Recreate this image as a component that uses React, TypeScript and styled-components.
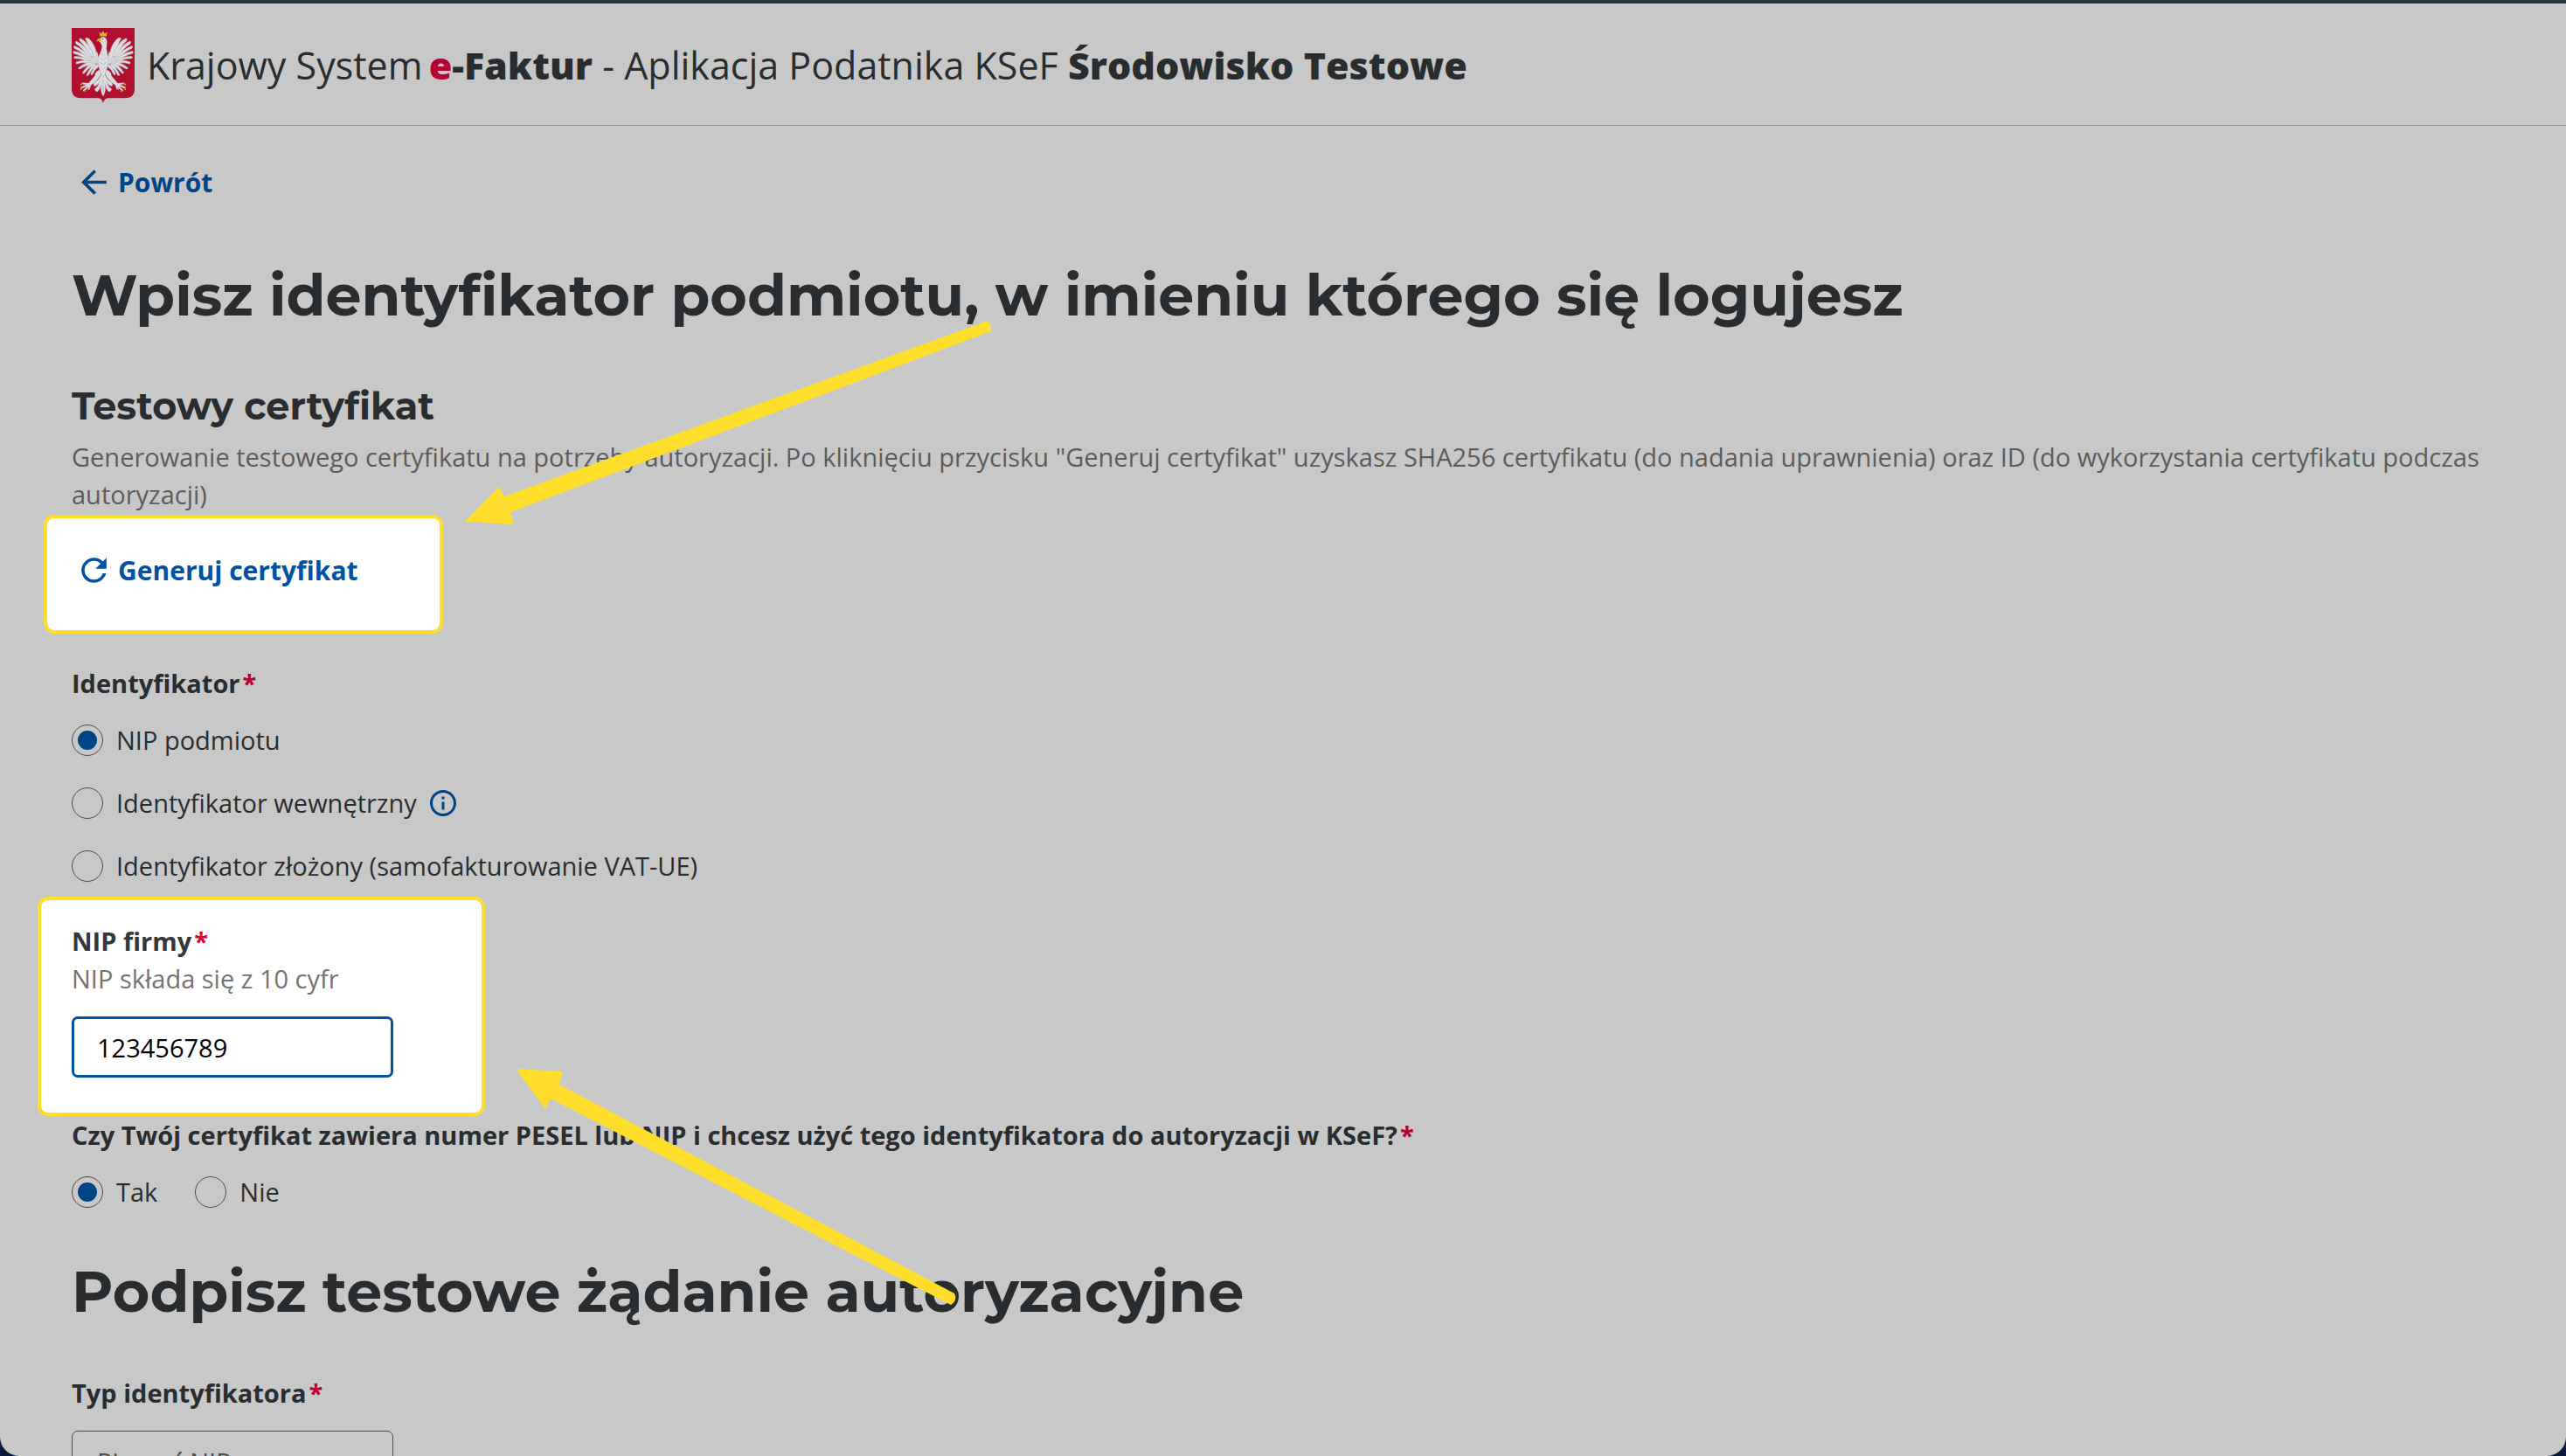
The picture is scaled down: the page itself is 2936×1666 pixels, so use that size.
import React, { useState } from 'react';
import styled, { createGlobalStyle } from 'styled-components';
import { MdArrowBack, MdInfoOutline, MdRefresh } from 'react-icons/md';

const color = {
  page: '#c8c8c8',
  ink: '#2a2d30',
  muted: '#5c5c5c',
  link: '#004488',
  red: '#b40032',
  yellow: '#ffdd2b',
  line: '#8f8f8f',
};

const GlobalStyle = createGlobalStyle`
  *, *::before, *::after { box-sizing: border-box; }
  body {
    margin: 0;
    background: #0a1a3c;
    color: ${color.ink};
    font-family: 'Open Sans', 'Noto Sans', sans-serif;
    font-size: 29px;
    line-height: 43px;
  }
  h1, h2, p, fieldset, legend { margin: 0; padding: 0; border: 0; }
`;

const Page = styled.div`
  height: 100vh;
  overflow: hidden;
  background: ${color.page};
  border-top: 4px solid #28333d;
  border-radius: 0 0 22px 22px;
`;

const Header = styled.header`
  display: flex;
  align-items: center;
  gap: 14px;
  height: 140px;
  padding: 2px 82px 0;
  border-bottom: 1px solid ${color.line};
`;

const Emblem = styled.svg`
  width: 72px;
  height: 86px;
  flex: none;
`;

const Brand = styled.p`
  font-size: 43px;
  line-height: 60px;
  b { font-weight: 800; }
`;

const BrandMark = styled.b`
  margin-left: -4px;
`;

const Accent = styled.span`
  color: ${color.red};
`;

const Main = styled.main`
  display: flex;
  flex-direction: column;
  align-items: flex-start;
  padding: 43px 82px 0;
`;

const TextButton = styled.button<{ $bright?: boolean }>`
  display: flex;
  align-items: center;
  gap: 6px;
  height: 43px;
  margin: 0;
  padding: 0 4px;
  border: 0;
  background: none;
  color: ${(p) => (p.$bright ? '#0052a5' : color.link)};
  font: inherit;
  font-size: 30px;
  font-weight: 700;
  cursor: pointer;
  svg { width: 43px; height: 43px; flex: none; }
`;

const Title = styled.h1<{ $top: number }>`
  margin-top: ${(p) => p.$top}px;
  font-family: Montserrat, Inter, sans-serif;
  font-size: 65px;
  line-height: 80px;
  font-weight: 700;
`;

const Subtitle = styled.h2`
  margin: 60px 0 9px;
  font-family: Montserrat, Inter, sans-serif;
  font-size: 43px;
  line-height: 54px;
  font-weight: 700;
`;

const Hint = styled.p<{ $bright?: boolean }>`
  color: ${(p) => (p.$bright ? '#737373' : color.muted)};
`;

const Highlight = styled.section<{ $outset: number; $width: number; $pad: string }>`
  position: relative;
  width: ${(p) => p.$width}px;
  margin-left: -${(p) => p.$outset}px;
  padding: ${(p) => p.$pad};
  background: #fff;
  border: 4px solid ${color.yellow};
  border-radius: 12px;
`;

const CertificateBox = styled(Highlight)`
  margin-top: 2px;
`;

const TaxIdBox = styled(Highlight)`
  margin-top: 14px;
`;

const Pointer = styled.svg<{ $left: number; $top: number }>`
  position: absolute;
  left: ${(p) => p.$left}px;
  top: ${(p) => p.$top}px;
  fill: ${color.yellow};
  pointer-events: none;
  z-index: 1;
`;

const Group = styled.fieldset<{ $top: number }>`
  margin-top: ${(p) => p.$top}px;
  min-width: 0;
`;

const Legend = styled.legend`
  font-weight: 700;
`;

const Label = styled.label<{ $bright?: boolean }>`
  display: block;
  font-weight: 700;
  color: ${(p) => (p.$bright ? '#33373b' : color.ink)};
`;

const Star = styled.span<{ $bright?: boolean }>`
  margin-left: 3px;
  color: ${(p) => (p.$bright ? '#e00034' : color.red)};
`;

const Options = styled.div<{ $inline?: boolean }>`
  display: flex;
  flex-direction: ${(p) => (p.$inline ? 'row' : 'column')};
  gap: ${(p) => (p.$inline ? 43 : 29)}px;
  margin-top: 22px;
`;

const Option = styled.div`
  display: flex;
  align-items: center;
`;

const OptionLabel = styled.label`
  display: flex;
  align-items: center;
  gap: 15px;
`;

const Radio = styled.input`
  appearance: none;
  display: grid;
  place-items: center;
  width: 36px;
  height: 36px;
  margin: 0;
  border: 1px solid #4c4c4c;
  border-radius: 50%;
  &:checked::before {
    content: '';
    width: 22px;
    height: 22px;
    border-radius: 50%;
    background: ${color.link};
  }
`;

const InfoButton = styled.button`
  display: flex;
  margin: 0 0 0 12px;
  padding: 0;
  border: 0;
  background: none;
  color: ${color.link};
  svg { width: 36px; height: 36px; }
`;

const fieldBox = `
  display: block;
  width: 368px;
  height: 70px;
  margin: 22px 0 0;
  border-radius: 7px;
  background: transparent;
  font: inherit;
  outline: 0;
`;

const TextInput = styled.input`
  ${fieldBox}
  padding: 0 26px;
  border: 3px solid #0052a5;
  color: #000;
`;

const Select = styled.select`
  ${fieldBox}
  appearance: none;
  padding: 0 28px;
  border: 1px solid #4c4c4c;
  color: #4c4c4c;
`;

const wingFeathers = [
  'M130 152 L122 120 Q116 86 94 68 Q84 64 83 70 Q94 84 95 104 L112 140Z',
  'M114 132 Q96 82 66 68 Q60 70 64 77 Q82 92 98 128Z',
  'M108 136 Q84 92 52 78 Q46 82 52 88 Q74 100 96 136Z',
  'M110 142 Q76 104 45 94 Q40 99 46 103 Q72 114 98 144Z',
  'M112 146 Q74 116 43 112 Q38 118 44 120 Q70 126 98 148Z',
  'M112 148 Q74 128 46 130 Q40 136 48 137 Q76 136 100 154Z',
  'M114 148 Q80 138 52 149 Q48 156 56 155 Q82 146 104 158Z',
  'M116 148 Q88 146 60 168 Q58 175 66 172 Q88 158 108 160Z',
  'M118 150 Q94 154 74 184 Q74 192 81 186 Q96 166 114 160Z',
  'M120 152 Q102 162 88 192 Q89 199 95 193 Q106 172 120 162Z',
  'M126 154 Q108 170 102 190 Q104 197 109 190 Q116 174 130 164Z',
];

function Wing() {
  return (
    <g>
      {wingFeathers.map((d) => (
        <path key={d} d={d} fill="#dcdde0" stroke="#b4b5bb" strokeWidth="2" />
      ))}
      <path d="M134 150 L124 112 Q118 118 124 134 Q110 128 100 138 Q104 154 134 156Z" fill="#d2d3d7" />
    </g>
  );
}

function Leg() {
  return (
    <g>
      <path d="M134 176 Q118 178 116 196 L94 222 L102 229 L122 212 Q134 200 138 190Z" fill="#dcdde0" stroke="#a5a6ad" strokeWidth="1" />
      <path
        d="M98 224 L76 222 M98 225 L70 236 M99 227 L78 246 M100 228 L96 240"
        fill="none"
        stroke="#d9d9dc"
        strokeWidth="6"
        strokeLinecap="round"
      />
      <path
        d="M74 221 L67 226 M70 236 L68 243 M78 245 L84 248 M96 239 L92 242"
        fill="none"
        stroke="#d8a445"
        strokeWidth="4"
        strokeLinecap="round"
      />
    </g>
  );
}

function EagleEmblem() {
  return (
    <Emblem viewBox="36 33 218 256" preserveAspectRatio="none" role="img" aria-label="Godło Polski">
      <path d="M36 33H254V240Q254 272 222 272H164Q149 272 145 289Q141 272 126 272H68Q36 272 36 240Z" fill="#b00f30" />
      <Wing />
      <g transform="translate(290 0) scale(-1 1)">
        <Wing />
      </g>
      <Leg />
      <g transform="translate(290 0) scale(-1 1)">
        <Leg />
      </g>
      <g fill="#dcdde0" stroke="#a5a6ad" strokeWidth="1">
        <path d="M140 184 Q136 206 118 216 Q108 222 114 232 Q130 228 134 214 Q126 236 116 240 Q116 250 126 250 Q136 240 138 226 Q134 250 145 266 Q156 250 152 226 Q154 240 164 250 Q174 250 174 240 Q164 236 156 214 Q160 228 176 232 Q182 222 172 216 Q154 206 150 184Z" />
        <path d="M133 76 Q136 62 148 64 Q160 68 158 86 Q154 104 160 122 Q168 146 158 174 Q152 192 145 202 Q138 192 132 174 Q122 146 132 124 Q142 106 141 92 Q136 86 133 76Z" />
      </g>
      <path
        d="M137 120 L145 126 L153 120 M133 134 L145 142 L157 134 M133 150 L145 158 L157 150 M137 166 L145 174 L153 166 M145 206 V252"
        fill="none"
        stroke="#abadb4"
        strokeWidth="2"
      />
      <path d="M135 68 Q122 68 123 80 L130 76 L130 82 L140 77Z" fill="#d8a92a" />
      <path d="M135 62 L131 46 L139 52 L145 43 L150 52 L159 47 L156 63 Q145 59 135 62Z" fill="#e2b426" />
      <circle cx="143" cy="71" r="2" fill="#4a4a4a" />
    </Emblem>
  );
}

export default function App() {
  const [kind, setKind] = useState('nip');
  const [consent, setConsent] = useState('tak');
  const [nip, setNip] = useState('123456789');

  return (
    <>
      <GlobalStyle />
      <Page>
        <Header>
          <EagleEmblem />
          <Brand>
            Krajowy System{' '}
            <BrandMark>
              <Accent>e</Accent>-Faktur
            </BrandMark>{' '}
            - Aplikacja Podatnika KSeF <b>Środowisko Testowe</b>
          </Brand>
        </Header>
        <Main>
          <TextButton type="button">
            <MdArrowBack />
            Powrót
          </TextButton>
          <Title $top={68}>Wpisz identyfikator podmiotu, w imieniu którego się logujesz</Title>
          <Subtitle>Testowy certyfikat</Subtitle>
          <Hint>
            Generowanie testowego certyfikatu na potrzeby autoryzacji. Po kliknięciu przycisku "Generuj certyfikat"
            uzyskasz SHA256 certyfikatu (do nadania uprawnienia) oraz ID (do wykorzystania certyfikatu podczas
            autoryzacji)
          </Hint>
          <CertificateBox $outset={32} $width={457} $pad="38px 28px 47px">
            <TextButton type="button" $bright>
              <MdRefresh />
              Generuj certyfikat
            </TextButton>
            <Pointer $left={477} $top={-226} width="606" height="240" viewBox="531 367 606 240" aria-hidden="true">
              <path d="M1130 367 Q1135 372 1134 379 L584 586 L588 600 L532 597 L571 557 L577 568Z" />
            </Pointer>
          </CertificateBox>

          <Group $top={35}>
            <Legend>
              Identyfikator<Star>*</Star>
            </Legend>
            <Options>
              <Option>
                <OptionLabel>
                  <Radio type="radio" name="kind" checked={kind === 'nip'} onChange={() => setKind('nip')} />
                  NIP podmiotu
                </OptionLabel>
              </Option>
              <Option>
                <OptionLabel>
                  <Radio type="radio" name="kind" checked={kind === 'internal'} onChange={() => setKind('internal')} />
                  Identyfikator wewnętrzny
                </OptionLabel>
                <InfoButton type="button" aria-label="Informacja">
                  <MdInfoOutline />
                </InfoButton>
              </Option>
              <Option>
                <OptionLabel>
                  <Radio type="radio" name="kind" checked={kind === 'complex'} onChange={() => setKind('complex')} />
                  Identyfikator złożony (samofakturowanie VAT-UE)
                </OptionLabel>
              </Option>
            </Options>
          </Group>

          <TaxIdBox $outset={39} $width={512} $pad="25px 35px 40px">
            <Label htmlFor="nip" $bright>
              NIP firmy<Star $bright>*</Star>
            </Label>
            <Hint $bright>NIP składa się z 10 cyfr</Hint>
            <TextInput id="nip" type="text" value={nip} onChange={(e) => setNip(e.target.value)} />
            <Pointer $left={543} $top={193} width="508" height="272" viewBox="590 1223 508 272" aria-hidden="true">
              <path d="M590 1223 L644 1226 L640 1241 L1092 1480 Q1096 1488 1088 1493 L630 1257 L624 1269Z" />
            </Pointer>
          </TaxIdBox>

          <Group $top={0}>
            <Legend>
              Czy Twój certyfikat zawiera numer PESEL lub NIP i chcesz użyć tego identyfikatora do autoryzacji w KSeF?
              <Star>*</Star>
            </Legend>
            <Options $inline>
              <OptionLabel>
                <Radio type="radio" name="consent" checked={consent === 'tak'} onChange={() => setConsent('tak')} />
                Tak
              </OptionLabel>
              <OptionLabel>
                <Radio type="radio" name="consent" checked={consent === 'nie'} onChange={() => setConsent('nie')} />
                Nie
              </OptionLabel>
            </Options>
          </Group>

          <Title as="h2" $top={53}>
            Podpisz testowe żądanie autoryzacyjne
          </Title>
          <Group $top={54}>
            <Label htmlFor="type">
              Typ identyfikatora<Star>*</Star>
            </Label>
            <Select id="type">
              <option>Pieczęć NIP</option>
            </Select>
          </Group>
        </Main>
      </Page>
    </>
  );
}
